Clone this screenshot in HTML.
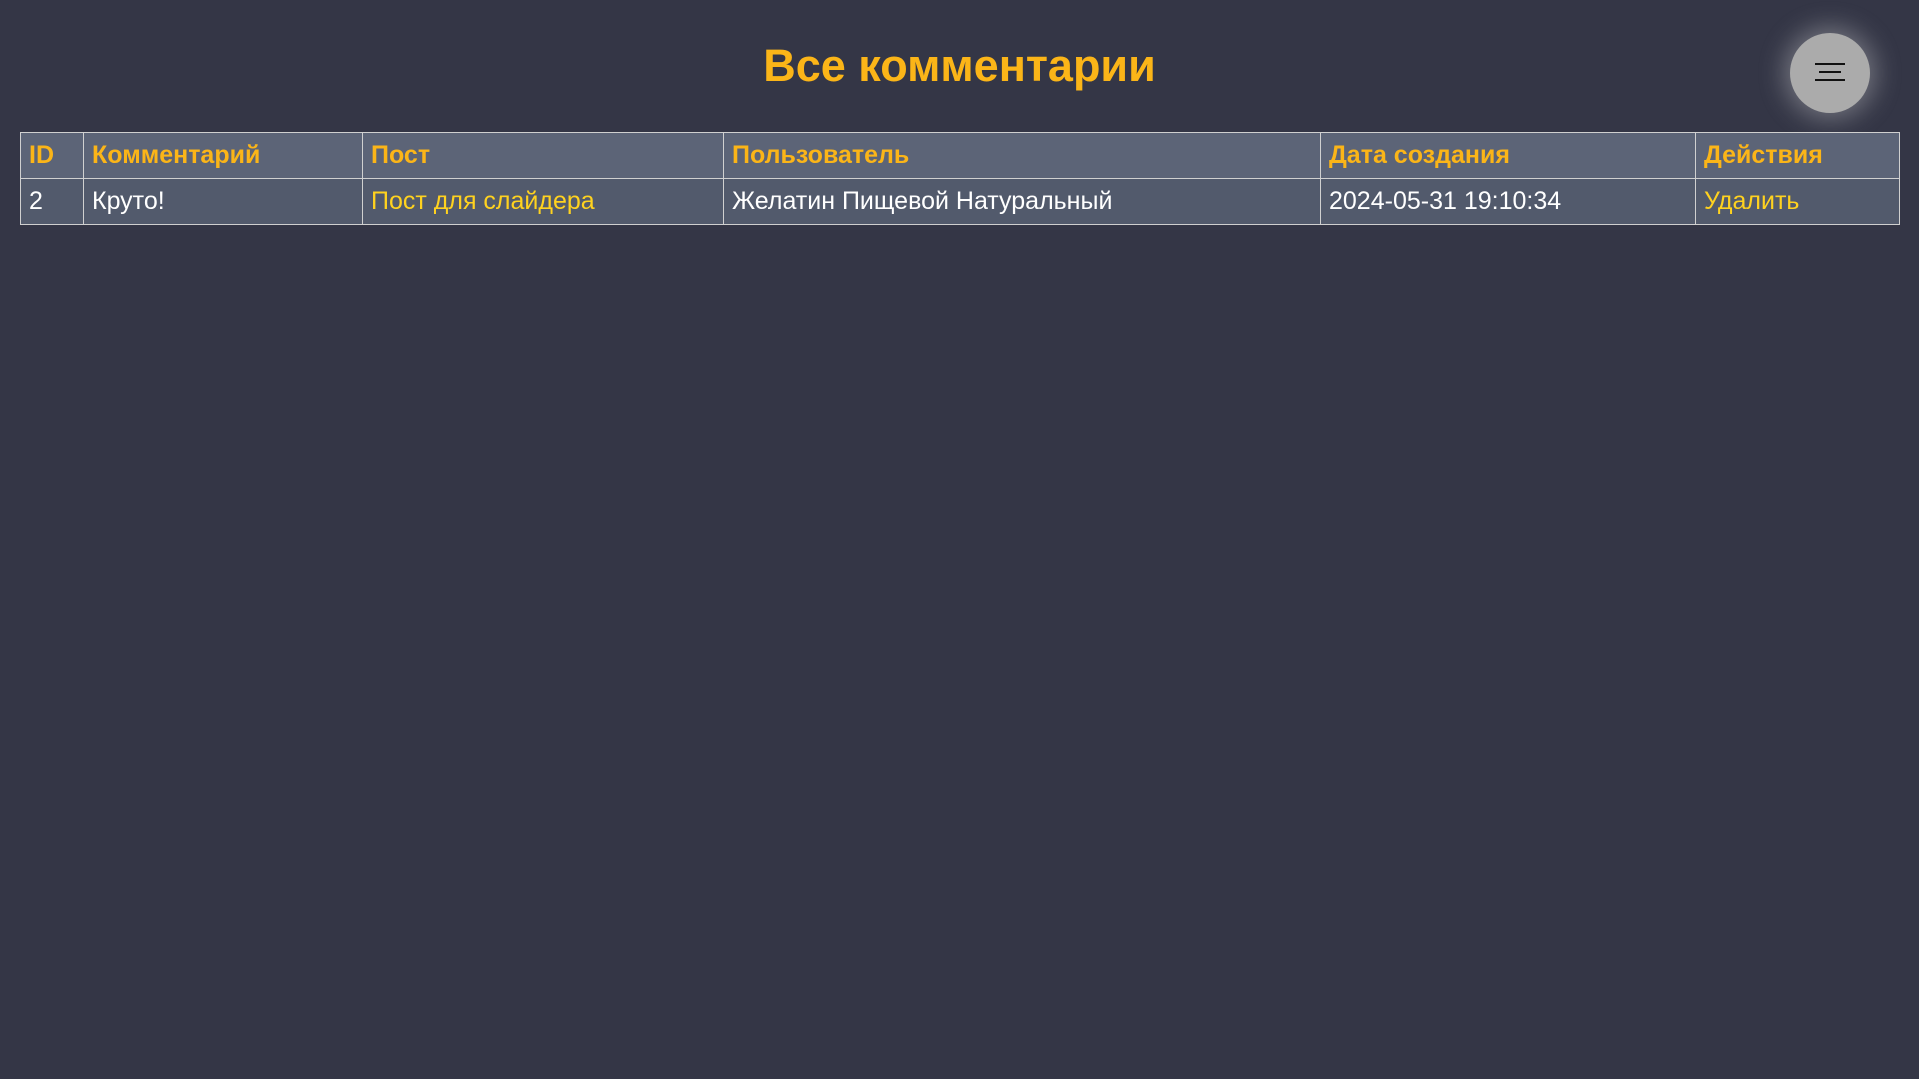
<!DOCTYPE html>
<html><head><meta charset="utf-8"><style>
body{margin:0;width:1919px;height:1079px;background:#343646;font-family:"Liberation Sans",Arial,sans-serif;overflow:hidden;position:relative}
h1{position:absolute;top:38px;left:0;width:1919px;text-align:center;margin:0;color:#fbb518;font-size:45px;font-weight:bold;line-height:56px}
.btn{position:absolute;left:1790px;top:33px;width:80px;height:80px;border-radius:50%;background:#ababab;box-shadow:0 0 25px 6px rgba(230,230,230,.35)}
.btn i{position:absolute;left:25px;width:30px;height:2px;background:#111}
table{position:absolute;left:20px;top:132px;width:1880px;border-collapse:collapse;font-size:25px}
td,th{border:1.5px solid #d0d0d0;padding:0 8px;height:45px;text-align:left}
th{background:#5c6477;color:#fbb518;font-weight:bold}
td{background:#525a6c;color:#fff}
.y{color:#ffd21f}
</style></head><body>
<h1>Все комментарии</h1>
<div class="btn"><i style="top:30px"></i><i style="top:38px;left:29px;width:22px"></i><i style="top:46px"></i></div>
<table>
<tr><th style="width:46px">ID</th><th style="width:262px">Комментарий</th><th style="width:344px">Пост</th><th style="width:580px">Пользователь</th><th style="width:358px">Дата создания</th><th>Действия</th></tr>
<tr><td>2</td><td>Круто!</td><td class="y">Пост для слайдера</td><td>Желатин Пищевой Натуральный</td><td>2024-05-31 19:10:34</td><td class="y">Удалить</td></tr>
</table>
</body></html>
